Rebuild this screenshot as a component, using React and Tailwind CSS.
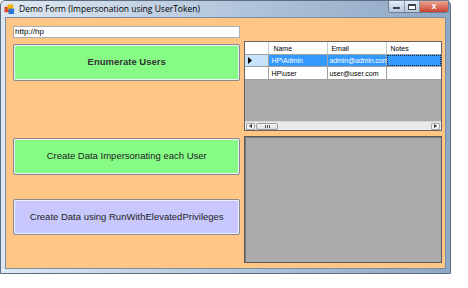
export default function App() {
  const ui = { fontFamily: '"Liberation Sans", Arial, sans-serif' }

  return (
    <div className="w-[468px] h-[288px] bg-white overflow-hidden" style={ui}>
      {/* window */}
      <div className="w-[451px] h-[274px] flex flex-col border border-[#5d6d80] rounded-t-[5px] bg-gradient-to-r from-[#dfe8f2] via-[#b4c7dc] to-[#8ea7c4]">
        {/* title bar */}
        <div className="h-[16px] flex items-center pl-[3px] relative">
          <svg width="11" height="11" viewBox="0 0 12 12" className="mr-[4px]">
            <rect x="0.5" y="3" width="6" height="6" fill="#e04a2a" />
            <rect x="4" y="0.5" width="6" height="6" fill="#f4b400" />
            <rect x="5" y="5" width="6" height="6" fill="#2b7bd6" />
          </svg>
          <span className="text-[8.5px] text-black leading-none" style={{ fontFamily: '"Open Sans", "Noto Sans", sans-serif' }}>
            Demo Form (Impersonation using UserToken)
          </span>
          <div className="absolute right-[1px] top-[-1px] flex h-[13px] border border-[#6a7c92] rounded-b-[3px] overflow-hidden">
            <div className="w-[16px] bg-gradient-to-b from-[#e4ecf5] to-[#b6c7da] border-r border-[#8c9db2] flex items-end justify-center pb-[3px]">
              <div className="w-[7px] h-[2px] bg-white border border-[#38465a]" />
            </div>
            <div className="w-[15px] bg-gradient-to-b from-[#e4ecf5] to-[#b6c7da] border-r border-[#8c9db2] flex items-center justify-center">
              <div className="w-[8px] h-[6px] border border-[#38465a] border-t-2 bg-white" />
            </div>
            <div className="w-[28px] bg-gradient-to-b from-[#e8a293] to-[#c8402a] flex items-center justify-center text-white text-[9px] font-bold leading-none">
              x
            </div>
          </div>
        </div>

        {/* client area */}
        <div className="flex-1 mx-[4px] mb-[4px] border border-[#7a8da6] bg-[#ffc685] flex gap-[4px] pl-[7px] pr-[3px] pt-[8px]">
          {/* left column */}
          <div className="w-[229px] flex flex-col">
            <div className="h-[12px] bg-white border border-[#abadb3] flex items-center pl-[1px] text-[8px] text-black leading-none">
              http://hp
            </div>
            <button className="mt-[6px] h-[37px] w-full bg-[#86fc86] border border-[#8a8a8a] rounded-[2px] shadow-[inset_0_0_0_1px_#eef] text-[9.5px] font-bold text-[#333]">
              Enumerate Users
            </button>
            <button className="mt-[57px] h-[37px] w-full bg-[#86fc86] border border-[#8a8a8a] rounded-[2px] shadow-[inset_0_0_0_1px_#eef] text-[9.5px] text-[#222]">
              Create Data Impersonating each User
            </button>
            <button className="mt-[24px] h-[36px] w-full bg-[#c8c8ff] border border-[#8a8a8a] rounded-[2px] shadow-[inset_0_0_0_1px_#eef] text-[9.5px] text-[#222]">
              Create Data using RunWithElevatedPrivileges
            </button>
          </div>

          {/* right column */}
          <div className="w-[199px] flex flex-col pt-[15px]">
            {/* data grid */}
            <div className="h-[90px] border border-[#646464] bg-[#ababab] flex flex-col text-[7px] leading-none">
              <div className="flex h-[13px] bg-white border-b border-[#a0a0a0]">
                <div className="w-[24px] border-r border-[#c8c8c8]" />
                <div className="w-[59px] border-r border-[#c8c8c8] pl-[4px] flex items-center">Name</div>
                <div className="w-[59px] border-r border-[#c8c8c8] pl-[3px] flex items-center">Email</div>
                <div className="flex-1 pl-[3px] flex items-center">Notes</div>
              </div>
              <div className="flex h-[12px] border-b border-[#a0a0a0]">
                <div className="w-[24px] bg-[#c6e3fb] border-r border-[#a0a0a0] flex items-center pl-[3px]">
                  <svg width="4" height="7" viewBox="0 0 4 7"><path d="M0 0 L4 3.5 L0 7 Z" fill="#000" /></svg>
                </div>
                <div className="w-[59px] bg-[#3399ff] text-white border-r border-[#a0a0a0] pl-[2px] flex items-center">HP\Admin</div>
                <div className="w-[59px] bg-[#3399ff] text-white border-r border-[#a0a0a0] pl-[1px] flex items-center whitespace-nowrap tracking-[-0.1px]">admin@admin.com</div>
                <div className="flex-1 bg-[#3399ff] border border-dotted border-[#0b2b5a]" />
              </div>
              <div className="flex h-[13px] bg-white border-b border-[#a0a0a0]">
                <div className="w-[24px] border-r border-[#a0a0a0]" />
                <div className="w-[59px] border-r border-[#a0a0a0] pl-[2px] flex items-center">HP\user</div>
                <div className="w-[59px] border-r border-[#a0a0a0] pl-[1px] flex items-center">user@user.com</div>
                <div className="flex-1" />
              </div>
              <div className="flex-1" />
              {/* horizontal scrollbar */}
              <div className="h-[9px] bg-[#eaeaea] border-t border-[#d4d4d4] flex items-center px-[1px] gap-[1px]">
                <div className="w-[9px] h-[7px] bg-[#f2f2f2] border border-[#a8a8a8] rounded-[1px] flex items-center justify-center">
                  <svg width="3" height="4" viewBox="0 0 3 4"><path d="M3 0 L0 2 L3 4 Z" fill="#333" /></svg>
                </div>
                <div className="w-[22px] h-[7px] bg-gradient-to-b from-[#f6f6f6] to-[#dcdcdc] border border-[#9a9a9a] rounded-[2px] flex items-center justify-center gap-[1px]">
                  <div className="w-px h-[3px] bg-[#555]" />
                  <div className="w-px h-[3px] bg-[#555]" />
                  <div className="w-px h-[3px] bg-[#555]" />
                </div>
                <div className="flex-1" />
                <div className="w-[9px] h-[7px] bg-[#f2f2f2] border border-[#a8a8a8] rounded-[1px] flex items-center justify-center">
                  <svg width="3" height="4" viewBox="0 0 3 4"><path d="M0 0 L3 2 L0 4 Z" fill="#333" /></svg>
                </div>
              </div>
            </div>

            {/* empty panel */}
            <div className="mt-[5px] h-[127px] bg-[#ababab] border border-[#5a5a5a] shadow-[inset_1px_1px_0_#7a7a7a]" />
          </div>
        </div>
      </div>
    </div>
  )
}
